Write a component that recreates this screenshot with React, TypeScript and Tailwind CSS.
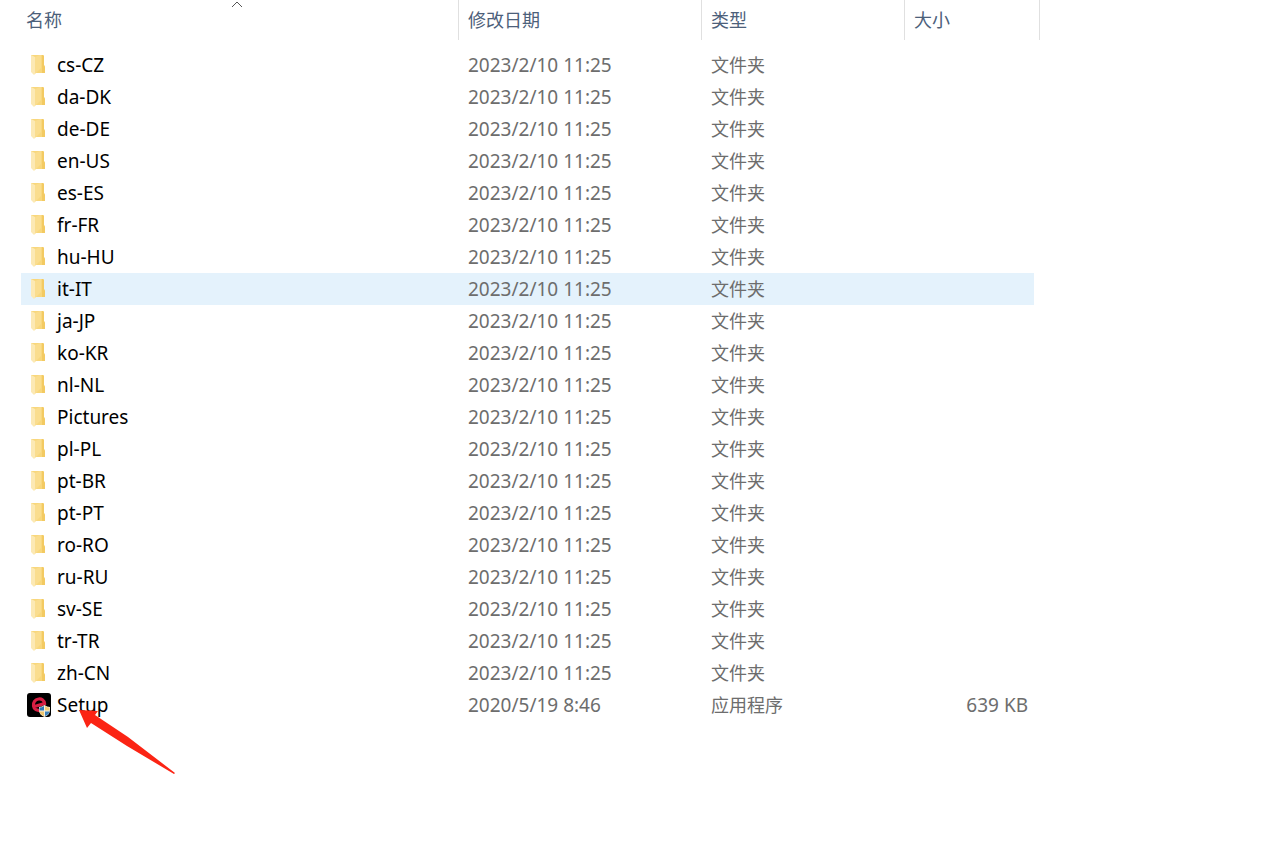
import { useState } from 'react';

type Entry = {
  name: string;
  date: string;
  type: string;
  size?: string;
};

const folders = [
  'cs-CZ', 'da-DK', 'de-DE', 'en-US', 'es-ES', 'fr-FR', 'hu-HU', 'it-IT', 'ja-JP', 'ko-KR',
  'nl-NL', 'Pictures', 'pl-PL', 'pt-BR', 'pt-PT', 'ro-RO', 'ru-RU', 'sv-SE', 'tr-TR', 'zh-CN',
];

const entries: Entry[] = [
  ...folders.map((name) => ({ name, date: '2023/2/10 11:25', type: '文件夹' })),
  { name: 'Setup', date: '2020/5/19 8:46', type: '应用程序', size: '639 KB' },
];

const columns = ['名称', '修改日期', '类型', '大小'];

const FolderIcon = () => (
  <svg className="ml-1 w-4 h-5 shrink-0" viewBox="0 0 16 20" aria-hidden="true">
    <path d="M0 0h12l1 1v9l1 2v6H4L0 16z" fill="#f8d77c" />
    <path d="M11 0h1l1 1v9l1 2v6h-3z" fill="#f3ca62" />
    <path d="M0 0l4 2v17l-1 1-3-3z" fill="#fce9b4" />
    <path d="M4 2l5-2h1v13l-6 6z" fill="#fadd8e" />
  </svg>
);

const SetupIcon = () => (
  <svg className="w-6 h-6 shrink-0" viewBox="0 0 24 24" aria-hidden="true">
    <rect width="24" height="24" rx="3" fill="#000" />
    <path
      d="M7.500 13.500l10-3C17 7 14.500 5.500 11.500 6 8 6.500 6 9.500 6.500 13c.5 3.500 3.500 5 7 4"
      fill="none"
      stroke="#d81f43"
      strokeWidth="3.200"
    />
    {/* UAC shield */}
    <path d="M12 14q3 0 5.500-2 2.500 2 5.500 2v3q0 5-5.500 7-5.500-2-5.500-7z" fill="#f4efdc" />
    <path d="M12.500 14.500q2.500 0 4.500-1.500v4.500h-4.500z" fill="#2f77b8" />
    <path d="M18 13q2 1.500 4.500 1.500v3H18z" fill="#f3cb74" />
    <path d="M12.500 18.500H17V23q-4-1.500-4.500-4.500z" fill="#efc56c" />
    <path d="M18 18.500h4.500Q22 21.500 18 23z" fill="#3b82bd" />
  </svg>
);

const Pointer = () => (
  <svg className="absolute left-[58px] top-5 w-[98px] h-[66px] pointer-events-none" viewBox="0 0 98 66" aria-hidden="true">
    <path d="M0 1l19 1-3 4 33 22 47 36-1 1-47-28-36-23-4 5z" fill="#fb2414" />
  </svg>
);

const App = () => {
  const [hovered, setHovered] = useState('it-IT');

  return (
    <main className="min-h-screen overflow-x-auto bg-white pl-[21px] font-['Noto_Sans','Noto_Sans_CJK_SC',sans-serif]">
      <table className="table-fixed w-[1019px] border-separate border-spacing-0 text-left">
        <colgroup>
          <col className="w-[438px]" />
          <col className="w-[243px]" />
          <col className="w-[203px]" />
          <col className="w-[129px]" />
          <col className="w-[6px]" />
        </colgroup>
        <thead>
          <tr>
            {columns.map((label, i) => (
              <th key={label} colSpan={i === 3 ? 2 : 1} className="p-0 pb-[9px] font-normal">
                <button
                  type="button"
                  className={`relative block w-full h-10 border-r border-[#e0e0e0] text-left text-[18px] leading-10 text-[#4c607a] ${i === 0 ? 'pl-[5px]' : 'pl-[9px]'}`}
                >
                  {label}
                  {i === 0 && (
                    <svg className="absolute inset-x-0 top-0 mx-auto w-4 h-2" viewBox="0 0 16 8" aria-hidden="true">
                      <path d="M0 7l5-5 5 5" fill="none" stroke="#555" strokeWidth="1" />
                    </svg>
                  )}
                </button>
              </th>
            ))}
          </tr>
        </thead>
        <tbody>
          {entries.map(({ name, date, type, size }) => {
            const cell = `h-8 p-0 ${hovered === name ? 'bg-[#e4f2fc]' : ''}`;
            return (
              <tr key={name} className="text-[19px] leading-8 text-[#6d6d6d]" onMouseEnter={() => setHovered(name)}>
                <td className={cell}>
                  <div className="relative flex items-center h-8 pl-[6px] text-black">
                    <span className="flex w-[30px]">{size ? <SetupIcon /> : <FolderIcon />}</span>
                    {name}
                    {size && <Pointer />}
                  </div>
                </td>
                <td className={`${cell} pl-[9px]`}>{date}</td>
                <td className={`${cell} pl-[9px] text-[18px]`}>{type}</td>
                <td className={`${cell} pr-[6px] text-right`}>{size}</td>
                <td className="p-0"></td>
              </tr>
            );
          })}
        </tbody>
      </table>
    </main>
  );
};

export default App;
